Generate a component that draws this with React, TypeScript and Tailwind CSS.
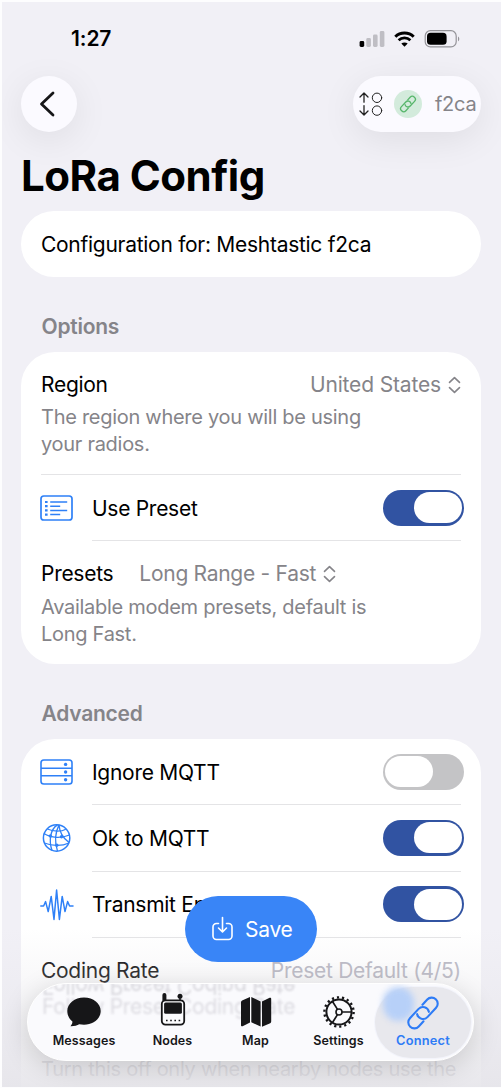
import type { ReactNode } from 'react';

interface IconProps {
  className?: string;
}

function StatusIcons() {
  return (
    <svg width="104" height="20" viewBox="0 0 104 20" fill="none">
      <rect x="1.6" y="12" width="4.6" height="6" rx="1.4" fill="#000" />
      <rect x="8.3" y="9" width="4.6" height="9" rx="1.4" fill="#bfbec4" />
      <rect x="15" y="5.6" width="4.6" height="12.4" rx="1.4" fill="#bfbec4" />
      <rect x="21.8" y="2" width="4.6" height="16" rx="1.4" fill="#bfbec4" />
      <path d="M37.3 7.7c5-5 13.4-5 18.4 0" stroke="#000" strokeWidth="3" />
      <path d="M40.6 11.2c3.3-3.1 8.5-3.1 11.8 0" stroke="#000" strokeWidth="2.8" />
      <path d="M46.5 17.8l-3.2-3.2c1.8-1.6 4.6-1.6 6.4 0z" fill="#000" />
      <rect x="67.2" y="1.7" width="31" height="16.2" rx="5.2" stroke="#949398" strokeWidth="1.2" />
      <rect x="69" y="3.8" width="19.6" height="12" rx="3.6" fill="#000" />
      <path d="M100 7.4c1.7.7 1.7 4.1 0 4.8z" fill="#949398" />
    </svg>
  );
}

function LinkIcon({ className }: IconProps) {
  return (
    <svg viewBox="-17 -17 34 34" fill="none" stroke="currentColor" strokeLinecap="round" className={className}>
      <g transform="rotate(-47)">
        <path d="M-5.4 5.7H-12a5.700 5.700 0 0 1 0-11.400H0A5.700 5.700 0 0 1 4.600 3.300" />
        <path d="M5.400-5.700H12a5.700 5.700 0 0 1 0 11.400H0A5.700 5.700 0 0 1-4.600-3.300" />
      </g>
    </svg>
  );
}

function TransferIcon() {
  return (
    <svg width="24" height="26" viewBox="0 0 24 26" fill="none" stroke="#222" strokeWidth="1.3" strokeLinecap="round" strokeLinejoin="round">
      <path d="M5 11.2V2M1 6l4-4 4 4M5 14.6v9.2M1 20l4 4 4-4" />
      <circle cx="18" cy="6.8" r="4.7" strokeWidth="1" />
      <circle cx="18" cy="19.6" r="4.7" strokeWidth="1" />
    </svg>
  );
}

function PresetIcon() {
  return (
    <svg width="34" height="26" viewBox="0 0 34 26" fill="none" stroke="#2e80f7" strokeWidth="1.5">
      <rect x="1" y="1" width="31" height="24" rx="2.8" strokeWidth="1.7" />
      <path d="M10.2 7h17M10.2 11.2h10M10.2 15.4h17M10.2 19.6h10" />
      <path d="M5 7h2.6M5 11.2h2.6M5 15.4h2.6M5 19.6h2.6" strokeWidth="2.2" />
    </svg>
  );
}

function ServerIcon() {
  return (
    <svg width="34" height="26" viewBox="0 0 34 26" fill="none" stroke="#2e80f7" strokeWidth="1.6">
      <rect x="1" y="1" width="31" height="24" rx="2.8" />
      <path d="M1 9.2h31M1 16.8h31" />
      <g fill="#2e80f7" stroke="none">
        <circle cx="25.6" cy="5.4" r="1.7" />
        <circle cx="25.6" cy="13" r="1.7" />
        <circle cx="25.6" cy="20.7" r="1.7" />
      </g>
    </svg>
  );
}

function GlobeIcon() {
  return (
    <svg width="34" height="30" viewBox="0 0 34 30" fill="none" stroke="#2e80f7" strokeWidth="1.3">
      <circle cx="16.6" cy="15" r="13.2" strokeWidth="1.5" />
      <path d="M7.400 6c6 2.800 14 2.800 18.400.2M4 10.500c7 4.800 18 4.800 25.400 1.500M4.500 20c7 3 17 3.500 24.500 0" />
      <path d="M17.500 1.900C10.500 6 8.500 17 12 27.500M19 1.900c-3.500 7-4.500 17-1.500 26.200M19 1.900c.5 7 3.500 13 10 17.600" />
      <g fill="#2e80f7" stroke="none">
        <circle cx="10.400" cy="13" r="1.700" />
        <circle cx="21.500" cy="13.800" r="1.700" />
        <circle cx="16.800" cy="22.200" r="1.700" />
      </g>
    </svg>
  );
}

function WaveIcon() {
  return (
    <svg width="34" height="34" viewBox="0 0 34 34" fill="none" stroke="#2e80f7" strokeWidth="1.500" strokeLinecap="round" strokeLinejoin="round">
      <path d="M.8 18H3.600L5.600 13.600 8.200 23.600 11.200 8.400 14 31.400 16.600 2 19.400 31.400 22.200 8.400 25 23.600 27.600 13.600 29.600 18H33" />
    </svg>
  );
}

function Chevrons() {
  return (
    <svg width="13" height="18" viewBox="0 0 13 18" fill="none" stroke="#858489" strokeWidth="1.600" strokeLinecap="round" strokeLinejoin="round">
      <path d="M1.500 6.400 6.500 1.600l5 4.800M1.500 11.600l5 4.800 5-4.800" />
    </svg>
  );
}

function MessageIcon() {
  return (
    <svg width="36" height="36" viewBox="0 0 36 36" fill="#161618">
      <path d="M18 4.500c9.400 0 16.700 5.900 16.700 13.600S27.400 31.700 18 31.700c-1.700 0-3.300-.2-4.800-.5-2 1.200-5 2.100-8.700 2 1.300-1.400 2-3 1.900-4.700C3.200 25.900 1.300 22.300 1.300 18.100 1.300 10.400 8.600 4.500 18 4.500z" />
    </svg>
  );
}

function RadioIcon() {
  return (
    <svg width="36" height="36" viewBox="0 0 36 36" fill="none">
      <rect x="7.400" y="0" width="4" height="9" rx="2" fill="#161618" />
      <circle cx="25" cy="3.300" r="2.500" fill="#161618" />
      <path d="M25 4v4" stroke="#161618" strokeWidth="1.600" />
      <rect x="6.800" y="7.400" width="22.400" height="24.200" rx="3.600" fill="#fbfbfd" stroke="#161618" strokeWidth="1.800" />
      <rect x="9.100" y="9.400" width="17.800" height="11.400" rx="1.600" fill="#161618" />
      <path d="M11 27.500h1.600M15.200 27.500h1.600M19.400 27.500H21M23.600 27.500h1.600" stroke="#161618" strokeWidth="1.700" />
    </svg>
  );
}

function MapIcon() {
  return (
    <svg width="36" height="36" viewBox="0 0 36 36" fill="#161618">
      <path d="M3 9.300c0-.8.400-1.300 1.100-1.700L12 4v25.500L4.600 33.200c-.9.400-1.600 0-1.600-1zM13.300 4l9.300 4.400v25.200l-9.300-4.400zM24 8.500l7.600-3.700c.9-.4 1.600 0 1.600 1v22.800c0 .8-.3 1.300-1 1.700L24 33.700z" />
    </svg>
  );
}

function GearIcon() {
  return (
    <svg width="36" height="36" viewBox="0 0 36 36" fill="none" stroke="#161618">
      <circle cx="18" cy="19" r="12.600" strokeWidth="2" />
      <circle cx="18" cy="19" r="14.600" strokeWidth="2.400" strokeDasharray="2.200 2.896" />
      <circle cx="18" cy="19" r="3" strokeWidth="1.600" />
      <path d="M21 19h9.500M16.500 16.400 11.500 8.500M16.500 21.600l-5 7.900" strokeWidth="1.700" />
    </svg>
  );
}

function Toggle({ on }: { on: boolean }) {
  return (
    <div
      className={`flex h-[36px] w-[81px] items-center rounded-full px-[2px] ${
        on ? 'justify-end bg-[#3153a2]' : 'justify-start bg-[#c4c4c6]'
      }`}
    >
      <div className="h-[31px] w-[48px] rounded-full bg-white" />
    </div>
  );
}

interface ToggleRowProps {
  icon: ReactNode;
  label: string;
  on: boolean;
}

function ToggleRow({ icon, label, on }: ToggleRowProps) {
  return (
    <div className="flex h-[66.300px] items-center pl-[18.500px]">
      <div className="flex w-[34px] justify-center">{icon}</div>
      <div className="ml-[18.500px] flex h-full flex-1 items-center justify-between border-b border-[#e4e4e6] mr-[20px]">
        <span className="pt-[2px]">{label}</span>
        <div className="-mr-[3px]">
          <Toggle on={on} />
        </div>
      </div>
    </div>
  );
}

function SectionTitle({ children }: { children: ReactNode }) {
  return <h2 className="pl-[20.500px] leading-[26px] font-semibold tracking-[-0.250px] text-[#858489]">{children}</h2>;
}

const tabs = [
  { label: 'Messages', icon: <MessageIcon />, width: 'w-[88px]' },
  { label: 'Nodes', icon: <RadioIcon />, width: 'w-[89px]' },
  { label: 'Map', icon: <MapIcon />, width: 'w-[77px]' },
  { label: 'Settings', icon: <GearIcon />, width: 'w-[89px]' },
];

function TabBar() {
  return (
    <nav className="absolute top-[981px] left-[25px] flex h-[78px] w-[447px] items-center overflow-hidden rounded-full border border-white bg-[#fafafd] pl-[12px] shadow-[0_6px_28px_rgba(0,0,0,0.16)]">
      {/* Content showing through the glass */}
      <div className="absolute top-[-11px] left-[14px] -scale-y-100 leading-[26px] whitespace-nowrap text-[#d8d7dd] blur-[1px]">Follow Preset Coding Rate</div>
      <div className="absolute top-[10px] left-[14px] leading-[26px] whitespace-nowrap text-[#dddce2] blur-[1px]">Follow Preset Coding Rate</div>

      {tabs.map((tab) => (
        <button key={tab.label} className={`relative flex flex-col items-center pb-[2px] ${tab.width}`}>
          {tab.icon}
          <span className="mt-[4px] text-[12.500px] leading-[16px] font-semibold tracking-[0.100px] text-[#161618]">
            {tab.label}
          </span>
        </button>
      ))}
      <button className="relative ml-[-8px] flex h-[71px] w-[96px] flex-col items-center rounded-full bg-[#e8e8ed] pt-[8px] text-[#2e7cf6] shadow-[0_0_0_1px_#f3f4fb]">
        <span className="absolute top-0 left-[8px] h-[34px] w-[31px] rounded-2xl bg-[#b7d0f8] blur-[3px]" />
        <LinkIcon className="relative size-[36px] stroke-[2]" />
        <span className="relative mt-[2px] text-[12.800px] leading-[16px] font-semibold tracking-[0.200px]">Connect</span>
      </button>
    </nav>
  );
}

export default function App() {
  return (
    <div className="relative h-[1088px] w-[501px] overflow-hidden border-t-2 border-b border-l-2 border-[#fdfdfe] bg-[#f1f0f6] font-['Inter','Liberation_Sans',sans-serif] text-[21px] tracking-[-0.280px] text-black">
      {/* Status bar */}
      <div className="flex h-[74px] items-center justify-between pr-[39px] pl-[69px]">
        <span className="text-[21px] font-semibold tracking-[-0.100px]">1:27</span>
        <StatusIcons />
      </div>

      <header className="flex justify-between pr-[20px] pl-[19px]">
        <button className="flex size-[56px] items-center justify-center rounded-full bg-[#fbfaff] pr-[4px] shadow-[0_8px_36px_rgba(0,0,0,0.08)]">
          <svg width="18" height="26" viewBox="0 0 18 26" fill="none" stroke="#161618" strokeWidth="2.800" strokeLinecap="round" strokeLinejoin="round">
            <path d="M15 2 3.500 13 15 24" />
          </svg>
        </button>
        <div className="flex h-[56px] w-[128px] items-center rounded-full bg-[#fbfaff] pl-[6px] shadow-[0_8px_36px_rgba(0,0,0,0.08)]">
          <TransferIcon />
          <span className="ml-[11px] flex size-[28px] items-center justify-center rounded-full bg-[#d3ebdc]">
            <LinkIcon className="size-[18px] stroke-[2.500] text-[#57b66b]" />
          </span>
          <span className="ml-[13px] text-[20px] text-[#858489]">f2ca</span>
        </div>
      </header>

      <main className="pr-[20px] pl-[19px]">
        <h1 className="mt-[18px] text-[42px] leading-[52px] font-bold tracking-[-0.500px]">LoRa Config</h1>

        <div className="mt-[9px] flex h-[66px] items-center rounded-full bg-white pt-[2px] pr-5 pl-[20px]">
          Configuration for: Meshtastic f2ca
        </div>

        <div className="mt-[37px]">
          <SectionTitle>Options</SectionTitle>
        </div>
        <section className="mt-[12px] h-[312px] rounded-[34px] bg-white pt-[20px]">
          <div className="mx-[20px] h-[103px] border-b border-[#e4e4e6]">
            <div className="flex items-center justify-between leading-[26px]">
              <span>Region</span>
              <span className="flex items-center gap-[7px] tracking-[-0.150px] text-[#858489]">
                United States
                <Chevrons />
              </span>
            </div>
            <p className="mt-[6px] text-[20px] leading-[26.800px] text-[#858489]">
              The region where you will be using
              <br />
              your radios.
            </p>
          </div>
          <ToggleRow icon={<PresetIcon />} label="Use Preset" on />
          <div className="px-[20px] pt-[20px]">
            <div className="flex items-center leading-[26px]">
              <span>Presets</span>
              <span className="ml-[26px] flex items-center gap-[7px] text-[#858489]">
                Long Range - Fast
                <Chevrons />
              </span>
            </div>
            <p className="mt-[7px] text-[20px] leading-[26.800px] text-[#858489]">
              Available modem presets, default is
              <br />
              Long Fast.
            </p>
          </div>
        </section>

        <div className="mt-[37px]">
          <SectionTitle>Advanced</SectionTitle>
        </div>
        <section className="mt-[12px] h-[400px] rounded-t-[34px] bg-white">
          <ToggleRow icon={<ServerIcon />} label="Ignore MQTT" on={false} />
          <ToggleRow icon={<GlobeIcon />} label="Ok to MQTT" on />
          <ToggleRow icon={<WaveIcon />} label="Transmit Enabled" on />
          <div className="flex h-[66px] items-center justify-between px-[20px]">
            <span>Coding Rate</span>
            <span className="text-[#b3b2be]">Preset Default (4/5)</span>
          </div>
          <p className="mt-[52px] px-[20px] text-[20px] leading-[26px] whitespace-nowrap text-[#b4b3b9]">
            Turn this off only when nearby nodes use the
          </p>
        </section>
      </main>

      {/* Fade behind the tab bar */}
      <div className="absolute right-0 bottom-0 left-0 h-[158px] bg-gradient-to-b from-[#e6e5ea]/0 via-[#e6e5ea]/40 to-[#e6e5ea]/90" />

      <button className="absolute top-[894px] left-[183px] flex h-[65.500px] w-[132px] items-center rounded-full bg-[#3985f7] pl-[27px] text-white">
        <svg width="21" height="26" viewBox="0 0 21 26" fill="none" stroke="#fff" strokeWidth="1.600" strokeLinecap="round" strokeLinejoin="round">
          <path d="M6.500 7.500H4.400A3.400 3.400 0 0 0 1 10.900v9.200a3.400 3.400 0 0 0 3.400 3.400h12.200a3.400 3.400 0 0 0 3.400-3.400v-9.200a3.400 3.400 0 0 0-3.400-3.400h-2.100M10.500 1.500v14.300M6.500 12l4 4 4-4" />
        </svg>
        <span className="ml-[12px] pt-[2px]">Save</span>
      </button>

      <TabBar />
    </div>
  );
}
